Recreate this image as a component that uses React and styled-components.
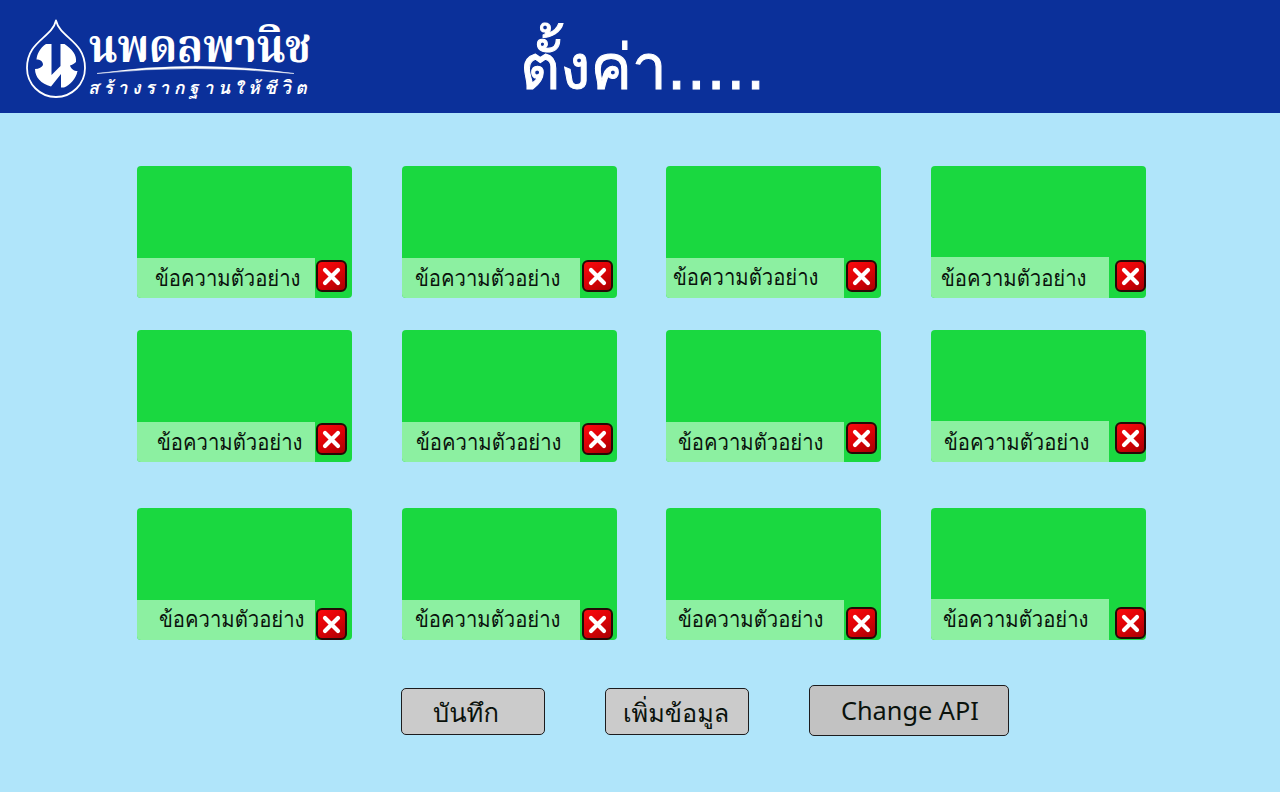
import React from 'react';
import styled, { createGlobalStyle } from 'styled-components';

const Global = createGlobalStyle`
  * { box-sizing: border-box; }
  body { margin: 0; background: #b0e5fa; font-family: Loma, "Noto Sans", sans-serif; }
`;

const Page = styled.div`
  width: 1280px;
  height: 792px;
  overflow: hidden;
  background: #b0e5fa;
  display: flex;
  flex-direction: column;
`;

const Header = styled.header`
  height: 113px;
  flex: none;
  display: grid;
  grid-template-columns: 520px 1fr;
  background: #0b309a;
`;

const Logo = styled.svg`
  display: block;
  width: 330px;
  height: 113px;
  overflow: visible;
`;

const Title = styled.h1`
  margin: 0;
  padding-top: 23px;
  font: 400 62px/90px "DejaVu Sans", Loma, sans-serif;
  color: #fff;
  -webkit-text-stroke: 1px #fff;
  white-space: nowrap;
`;

const Board = styled.main`
  padding: 53px 0 0 137px;
  display: grid;
  grid-template-columns: 215px 214px 215px 215px;
  grid-template-rows: 132px 132px 146px;
  column-gap: 50px;
  row-gap: 32px;
`;

const Card = styled.article`
  position: relative;
  width: 215px;
  height: 132px;
  margin-top: ${(p) => p.$drop}px;
  border-radius: 4px;
  overflow: hidden;
  background: #1ad840;
  display: flex;
  align-items: flex-end;
`;

const Caption = styled.div`
  width: 178px;
  height: ${(p) => p.$tall}px;
  padding-left: ${(p) => p.$indent}px;
  display: flex;
  align-items: flex-end;
  background: #8cf0a1;
`;

const Text = styled.span`
  flex: none;
  font-size: ${(p) => p.$size}px;
  line-height: 40px;
  color: #0a120c;
  white-space: nowrap;
  transform: translateY(${(p) => p.$shift || 0}px) scaleX(${(p) => p.$stretch || 1});
  transform-origin: left center;
`;

const Remove = styled.button`
  position: absolute;
  left: ${(p) => p.$x}px;
  top: ${(p) => p.$y}px;
  width: 31px;
  height: 32px;
  padding: 0;
  border: 2px solid #240a06;
  border-radius: 6px;
  background: linear-gradient(145deg, #fb0a0e, #dc0206 50%, #a80003);
  display: grid;
  place-items: center;
`;

const Actions = styled.footer`
  display: flex;
  align-items: center;
  padding: 45px 0 0 401px;
`;

const Action = styled.button`
  width: ${(p) => p.$w}px;
  height: ${(p) => p.$h}px;
  margin: ${(p) => p.$top || 0}px 60px 0 0;
  padding: 0 0 0 ${(p) => p.$indent}px;
  border: 1.5px solid #1c1c1e;
  border-radius: 5px;
  background: ${(p) => p.$bg};
  font-family: ${(p) => p.$font || 'inherit'};
  display: flex;
  align-items: center;
`;

const rows = [
  [[18, 40, 178.5, 94.4, 0], [13, 40, 180, 94.4, 0], [7, 40, 180, 94, -1], [10, 41, 184, 94, 0]],
  [[20, 40, 178.5, 93, 0], [14, 40, 180, 93, 0], [12, 40, 180, 92, 0], [13, 41, 184, 92, 0]],
  [[22, 40, 178.5, 100, -1], [13, 40, 180, 100, -1], [12, 40, 180, 99, -1], [12, 41, 184, 99, -1]],
];

export default function App() {
  return (
    <Page>
      <Global />
      <Header>
        <Logo viewBox="0 0 330 113">
          <path d="M56 20.5C52 38 27 41 27 68a29 29 0 0 0 58 0C85 41 60 38 56 20.5Z" fill="none" stroke="#fff" strokeWidth="1.8" strokeLinejoin="round" />
          <path d="M46 44H51.5V75L60.5 66V44H64.5C72 49 77 55 76 62C74 64 72 65 70 65.5C71 69 74 71 77.5 71C76 79 70 85 64 87.5H61V74L51 86.5C41 84 35 77 35 69C39 69 42 67 43 65C43 61 40 59.500 36.500 59.500C37 54 40 48 46 44Z" fill="#fff" />
          <text x="89" y="62" fontSize="46" fontWeight="700" fontFamily='Norasi, Kinnari, "Noto Serif Thai", serif' textLength="222" lengthAdjust="spacingAndGlyphs" fill="#fff">นพดลพานิช</text>
          <path d="M97 73.500Q195 59 294 73.500Q195 63.500 97 73.500Z" fill="#fff" stroke="#fff" strokeWidth=".5" />
          <text x="88" y="94" fontSize="18" fontWeight="700" fontStyle="italic" fontFamily="Loma, sans-serif" textLength="219" fill="#fff">สร้างรากฐานให้ชีวิต</text>
        </Logo>
        <Title>ตั้งค่า.....</Title>
      </Header>
      <Board>
        {rows.map((row, r) =>
          row.map(([indent, tall, x, y, shift], c) => (
            <Card key={`${r}-${c}`} $drop={r === 2 ? 14 : 0}>
              <Caption $tall={tall} $indent={indent}>
                <Text $size={22.5} $stretch={0.9} $shift={shift}>ข้อความตัวอย่าง</Text>
              </Caption>
              <Remove $x={x} $y={y} aria-label="ลบ">
                <svg width="19" height="19" viewBox="0 0 19 19">
                  <path d="M3 3L16 16M16 3L3 16" stroke="#fff" strokeWidth="4.2" strokeLinecap="round" />
                </svg>
              </Remove>
            </Card>
          ))
        )}
      </Board>
      <Actions>
        <Action $w={144} $h={47} $top={2} $indent={31} $bg="#cbcbcb">
          <Text $size={25.5} $shift={1}>บันทึก</Text>
        </Action>
        <Action $w={144} $h={47} $top={2} $indent={17} $bg="#cbcbcb">
          <Text $size={25.2} $shift={1}>เพิ่มข้อมูล</Text>
        </Action>
        <Action $w={200} $h={51} $indent={31} $bg="#c2c2c2" $font='"Noto Sans", sans-serif'>
          <Text $size={25.3} $shift={-1}>Change API</Text>
        </Action>
      </Actions>
    </Page>
  );
}
